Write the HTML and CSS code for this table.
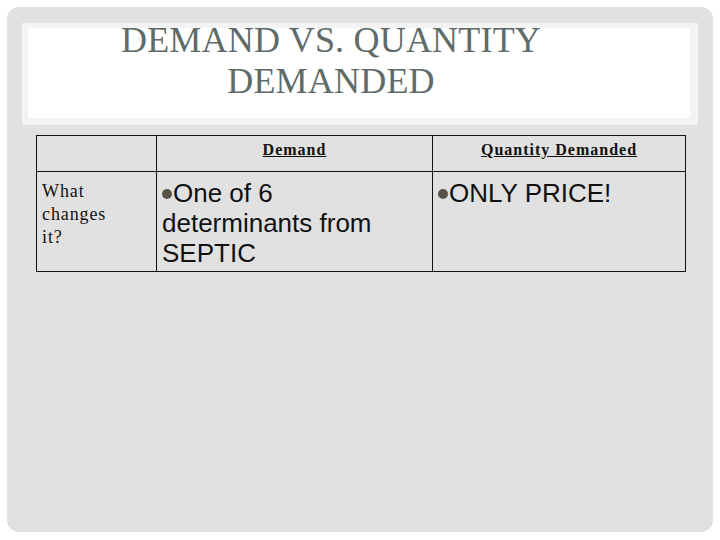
FILE: index.html
```html
<!DOCTYPE html>
<html>
<head>
<meta charset="utf-8">
<link rel="stylesheet" href="styles.css">
</head>
<body>
<div class="slide">
  <div class="titlebox">
    <h1 class="title">DEMAND VS. QUANTITY<br>DEMANDED</h1>
  </div>
  <table class="grid">
    <colgroup>
      <col class="c1"><col class="c2"><col class="c3">
    </colgroup>
    <tr class="head">
      <td></td>
      <td><span class="hd">Demand</span></td>
      <td><span class="hd">Quantity Demanded</span></td>
    </tr>
    <tr class="body">
      <td class="label">What changes it?</td>
      <td class="txt"><span class="dot"></span>One of 6 determinants from SEPTIC</td>
      <td class="txt"><span class="dot"></span>ONLY PRICE!</td>
    </tr>
  </table>
</div>
</body>
</html>
```
FILE: styles.css
```css
html, body {
  margin: 0;
  padding: 0;
  background: #ffffff;
}
.slide {
  margin: 7px;
  width: 706px;
  height: 525px;
  box-sizing: border-box;
  border-radius: 12px;
  background: #e1e1e1;
  padding: 16px 15px 0 15px;
  overflow: hidden;
}
.titlebox {
  height: 102px;
  box-sizing: border-box;
  background: #ffffff;
  border-style: solid;
  border-color: #f3f3f3;
  border-width: 5px 8px 7px 6px;
}
.title {
  margin: -8px 0 0 0;
  padding-right: 56px;
  font-family: "Liberation Serif", "Times New Roman", serif;
  font-weight: normal;
  font-size: 36px;
  line-height: 41px;
  letter-spacing: 0.2px;
  color: #5f6b69;
  text-align: center;
}
.grid {
  margin: 10px 0 0 14px;
  border-collapse: collapse;
  table-layout: fixed;
  width: 649px;
}
.c1 { width: 120px; }
.c2 { width: 276px; }
.c3 { width: 253px; }
.grid td {
  border: 1px solid #111111;
  padding: 0;
  vertical-align: top;
}
.head td {
  height: 36px;
  box-sizing: border-box;
  text-align: center;
  padding-top: 4px;
}
.hd {
  font-family: "Liberation Serif", "Times New Roman", serif;
  font-weight: bold;
  font-size: 16px;
  line-height: 20px;
  letter-spacing: 1px;
  text-decoration: underline;
  color: #111111;
}
.body td {
  height: 100px;
  box-sizing: border-box;
}
.label {
  padding: 8px 30px 0 5px !important;
  font-family: "Liberation Serif", "Times New Roman", serif;
  font-size: 18px;
  line-height: 23px;
  letter-spacing: 0.9px;
  color: #111111;
}
.txt {
  padding: 6px 4px 0 5px !important;
  font-family: "Liberation Sans", Arial, sans-serif;
  font-size: 26px;
  line-height: 30px;
  color: #111111;
}
.dot {
  display: inline-block;
  width: 10px;
  height: 10px;
  border-radius: 50%;
  background: #5b5247;
  margin-right: 1px;
  vertical-align: 3px;
}
```
